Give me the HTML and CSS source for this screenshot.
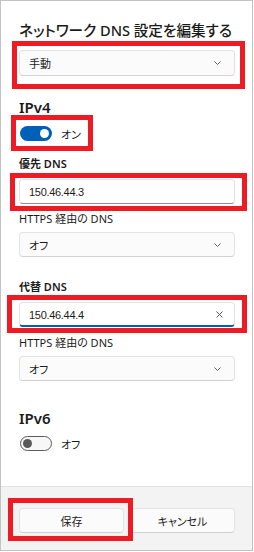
FILE: index.html
```html
<!DOCTYPE html>
<html lang="ja">
<head>
<meta charset="utf-8">
<title>DNS 設定</title>
<link rel="stylesheet" href="styles.css">
</head>
<body>
<div class="page">
  <div class="window">
    <div class="content">
      <h1 class="title">ネットワーク DNS 設定を編集する</h1>
      <div class="field select mt-10"><span>手動</span><svg class="chev" width="7" height="4" viewBox="0 0 7 4"><polyline points="0.5,0.5 3.5,3.5 6.5,0.5" /></svg></div>

      <h2 class="section mt-21">IPv4</h2>
      <div class="toggle-row mt-9"><span class="toggle on"><span class="knob"></span></span><span class="toggle-text">オン</span></div>

      <div class="label strong mt-15">優先 DNS</div>
      <div class="field input mt-7"><span>150.46.44.3</span></div>
      <div class="label mt-7">HTTPS 経由の DNS</div>
      <div class="field select mt-5"><span>オフ</span><svg class="chev" width="7" height="4" viewBox="0 0 7 4"><polyline points="0.5,0.5 3.5,3.5 6.5,0.5" /></svg></div>

      <div class="label strong mt-22">代替 DNS</div>
      <div class="field input focused mt-7"><span>150.46.44.4</span><svg class="clear" width="7" height="7" viewBox="0 0 7 7"><path d="M0.5 0.5 L6.5 6.5 M6.5 0.5 L0.5 6.5" /></svg></div>
      <div class="label mt-8">HTTPS 経由の DNS</div>
      <div class="field select mt-5"><span>オフ</span><svg class="chev" width="7" height="4" viewBox="0 0 7 4"><polyline points="0.5,0.5 3.5,3.5 6.5,0.5" /></svg></div>

      <h2 class="section mt-27">IPv6</h2>
      <div class="toggle-row mt-8"><span class="toggle off"><span class="knob"></span></span><span class="toggle-text">オフ</span></div>
    </div>
    <div class="footer">
      <button class="btn">保存</button>
      <button class="btn">キャンセル</button>
    </div>
  </div>
  <div class="mark m1"></div>
  <div class="mark m2"></div>
  <div class="mark m3"></div>
  <div class="mark m4"></div>
  <div class="mark m5"></div>
</div>
</body>
</html>
```

FILE: styles.css
```css
html, body {
  margin: 0;
  padding: 0;
  background: #ffffff;
}
body {
  font-family: "Noto Sans", "Noto Sans CJK JP", sans-serif;
  font-feature-settings: "palt";
  color: #1b1b1b;
  font-size: 11px;
}
.page {
  position: relative;
  width: 254px;
  height: 552px;
}
.window {
  box-sizing: border-box;
  width: 253px;
  height: 551px;
  border: 1px solid #c3c3c3;
  background: #ffffff;
  display: flex;
  flex-direction: column;
}
.content {
  padding: 19px 17px 0 18px;
  display: flex;
  flex-direction: column;
  flex: 1;
}
.title {
  margin: 0;
  font-size: 14.6px;
  line-height: 20px;
  font-weight: 500;
  white-space: nowrap;
}
.section {
  margin: 0;
  font-size: 15px;
  line-height: 20px;
  font-weight: 600;
}
.mt-5 { margin-top: 5px; }
.mt-7 { margin-top: 7px; }
.mt-8 { margin-top: 8px; }
.mt-9 { margin-top: 9px; }
.mt-10 { margin-top: 10px; }
.mt-15 { margin-top: 15px; }
.mt-21 { margin-top: 21px; }
.mt-22 { margin-top: 22px; }
.mt-27 { margin-top: 27px; }

.label {
  font-size: 11px;
  line-height: 16px;
  white-space: nowrap;
}
.label.strong {
  font-weight: 600;
}
.field {
  box-sizing: border-box;
  height: 25px;
  width: 216px;
  border: 1px solid #e3e3e3;
  border-radius: 4px;
  display: flex;
  align-items: center;
  justify-content: space-between;
  padding: 0 13px 0 9px;
  font-size: 11px;
  background: #fbfbfb;
}
.select {
  border-bottom-color: #d2d2d2;
}
.select:first-of-type { height: 26px; }
.input {
  background: #ffffff;
  border-bottom-color: #8d8d8d;
}
.input span {
  font-family: "Liberation Sans", "Noto Sans CJK JP", sans-serif;
  letter-spacing: -0.3px;
}
.input.focused {
  border-bottom: 2px solid #005fb8;
  padding-top: 1px;
  padding-right: 11px;
}
.chev polyline {
  fill: none;
  stroke: #606060;
  stroke-width: 1;
}
.clear path {
  fill: none;
  stroke: #5c5c5c;
  stroke-width: 1;
}
.toggle-row {
  display: flex;
  align-items: center;
  height: 15px;
  padding-left: 1px;
}
.toggle {
  box-sizing: border-box;
  width: 32px;
  height: 15px;
  border-radius: 8px;
  display: flex;
  align-items: center;
  padding: 0 3px;
}
.toggle .knob {
  width: 9px;
  height: 9px;
  border-radius: 50%;
}
.toggle.on {
  background: #005fb8;
  justify-content: flex-end;
}
.toggle.on .knob {
  background: #ffffff;
}
.toggle.off {
  background: #f7f7f7;
  border: 1px solid #5c5c5c;
  justify-content: flex-start;
  padding: 0 2px;
}
.toggle.off .knob {
  background: #5a5a5a;
}
.toggle-text {
  margin-left: 9px;
  font-size: 11px;
}
.footer {
  box-sizing: border-box;
  height: 64px;
  border-top: 1px solid #e3e3e3;
  background: #f3f3f3;
  padding: 21px 17px 0 18px;
  display: flex;
  gap: 6px;
}
.btn {
  box-sizing: border-box;
  flex: 1;
  height: 25px;
  margin: 0;
  border: 1px solid #e3e3e3;
  border-bottom-color: #cfcfcf;
  border-radius: 4px;
  background: #fbfbfb;
  font-family: inherit;
  font-feature-settings: "palt";
  font-size: 11px;
  color: #1b1b1b;
  padding: 0;
}
.mark {
  position: absolute;
  box-sizing: border-box;
  border: 5px solid #ed1c24;
  pointer-events: none;
}
.m1 { left: 12px; top: 41px; width: 233px; height: 48px; }
.m2 { left: 11px; top: 115px; width: 82px; height: 36px; }
.m3 { left: 10px; top: 173px; width: 237px; height: 38px; }
.m4 { left: 7px; top: 295px; width: 240px; height: 38px; }
.m5 { left: 8px; top: 498px; width: 125px; height: 43px; }
```
